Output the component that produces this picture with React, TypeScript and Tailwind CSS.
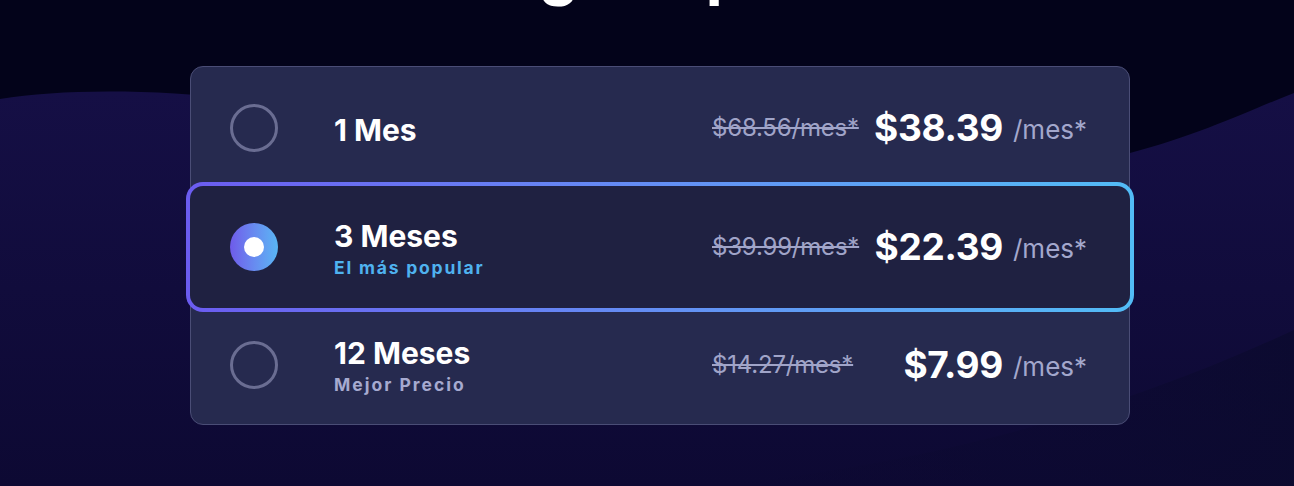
import React from "react";

type RowProps = {
  label: string;
  sub?: string;
  subClass?: string;
  old: string;
  price: string;
  selected?: boolean;
};

function RowContent({ label, sub, subClass, old, price, selected }: RowProps) {
  return (
    <div className={`flex h-full items-center ${selected ? "pl-[40px] pr-[43px]" : "pl-[39px] pr-[42px]"}`}>
      {selected ? (
        <div className="flex h-[48px] w-[48px] shrink-0 items-center justify-center rounded-full bg-gradient-to-r from-[#6e5aea] to-[#58b6f4]">
          <div className="h-[20px] w-[20px] rounded-full bg-white" />
        </div>
      ) : (
        <div className="h-[48px] w-[48px] shrink-0 rounded-full border-[3px] border-[#6a6d92]" />
      )}
      <div className="ml-[56px] flex flex-1 flex-col pt-[4px]">
        <div className="text-[30px] font-bold leading-[30px] text-white">{label}</div>
        {sub && (
          <div className={`mt-[7px] text-[17.5px] font-bold leading-[20px] ${subClass}`}>{sub}</div>
        )}
      </div>
      <div className="w-[155px] text-[24px] leading-[28px] tracking-[-0.2px] text-[#a0a4c8] line-through decoration-[2px]">
        {old}
      </div>
      <div className="w-[136px] text-right text-[37px] font-bold leading-[44px] tracking-[-0.3px] text-white">
        {price}
      </div>
      <div className="w-[84px] pl-[10px] pt-[4px] text-[26px] leading-[32px] text-[#a3a7cc]">/mes*</div>
    </div>
  );
}

export default function App() {
  return (
    <div className="relative h-[486px] w-[1294px] overflow-hidden bg-[#03031a] font-['Inter',sans-serif]">
      <svg className="absolute left-0 top-0" width="1294" height="486" viewBox="0 0 1294 486">
        <defs>
          <linearGradient id="wave" x1="0" y1="0" x2="0" y2="1">
            <stop offset="0" stopColor="#150f45" />
            <stop offset="1" stopColor="#0d0933" />
          </linearGradient>
          <linearGradient id="wave2" x1="0" y1="0" x2="1" y2="0">
            <stop offset="0" stopColor="#0c0830" stopOpacity="0" />
            <stop offset="1" stopColor="#0b0a2e" stopOpacity="0.8" />
          </linearGradient>
        </defs>
        <path
          d="M0,99 C60,90 140,88 250,100 C600,150 900,175 1130,153 C1200,135 1250,110 1294,93 L1294,486 L0,486 Z"
          fill="url(#wave)"
        />
        <path d="M700,486 C900,470 1100,420 1294,330 L1294,486 Z" fill="url(#wave2)" />
      </svg>

      <div className="relative flex flex-col items-center">
        <h1 className="-mt-[61px] pl-[10px] text-[62px] font-bold leading-[64px] text-white">Elige tu plan</h1>

        <div className="ml-[26px] mt-[63px] flex w-[940px] flex-col rounded-[13px] border border-[#4a4d76] bg-[#262a4f]">
          <div className="h-[122px]">
            <RowContent label="1 Mes" old="$68.56/mes*" price="$38.39" />
          </div>
          <div className="relative z-10 -mx-[5px] -my-[7px] h-[130px] rounded-[17px] bg-gradient-to-r from-[#6b5cf0] to-[#52bcf6] p-[4px]">
            <div className="h-full rounded-[13px] bg-[#1f2141]">
              <RowContent
                label="3 Meses"
                sub="El más popular"
                subClass="text-[#4fb2ef] tracking-[1.8px]"
                old="$39.99/mes*"
                price="$22.39"
                selected
              />
            </div>
          </div>
          <div className="h-[119px]">
            <RowContent
              label="12 Meses"
              sub="Mejor Precio"
              subClass="text-[#a6aad0] tracking-[2px]"
              old="$14.27/mes*"
              price="$7.99"
            />
          </div>
        </div>
      </div>
    </div>
  );
}
